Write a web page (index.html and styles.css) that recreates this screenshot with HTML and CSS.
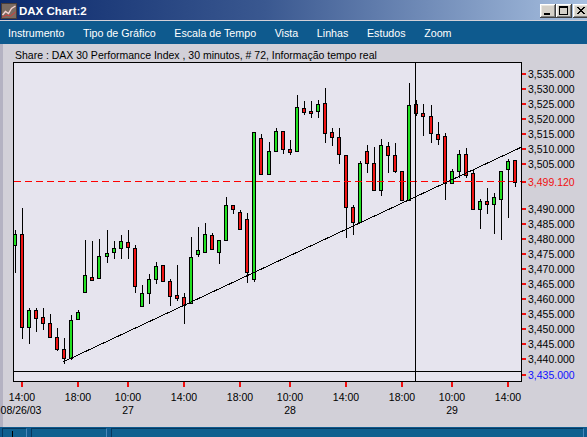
FILE: index.html
```html
<!DOCTYPE html>
<html>
<head>
<meta charset="utf-8">
<link rel="stylesheet" href="styles.css">
</head>
<body>
<div class="window">
  <div class="titlebar">
    <svg class="appicon" width="16" height="16" viewBox="0 0 16 16">
      <rect x="0" y="0" width="16" height="16" fill="#7a6b62"/>
      <rect x="0.5" y="0.5" width="15" height="15" fill="none" stroke="#4a3e38"/>
      <polyline points="1.5,12 4.5,8.5 7.5,10.5 10.5,5.5 14.5,3" fill="none" stroke="#f6d2d2" stroke-width="1.4"/>
      <polyline points="1.5,14 5.5,12 9.5,13 14.5,9" fill="none" stroke="#d83a3a" stroke-width="1"/>
    </svg>
    <span class="title">DAX Chart:2</span>
    <div class="buttons">
      <div class="btn">
        <svg width="16" height="14" viewBox="0 0 16 14"><rect x="4" y="9" width="6" height="2" fill="#000"/></svg>
      </div>
      <div class="btn">
        <svg width="16" height="14" viewBox="0 0 16 14"><rect x="3.5" y="2.5" width="8" height="8" fill="none" stroke="#000"/><rect x="3" y="2" width="9" height="2" fill="#000"/></svg>
      </div>
      <div class="btn btn-close">
        <svg width="16" height="14" viewBox="0 0 16 14"><path d="M4 3 L11 10 M5 3 L12 10 M11 3 L4 10 M12 3 L5 10" stroke="#000" stroke-width="1" fill="none"/></svg>
      </div>
    </div>
  </div>
  <div class="menubar">
    <span class="menuitem">Instrumento</span>
    <span class="menuitem">Tipo de Gráfico</span>
    <span class="menuitem">Escala de Tempo</span>
    <span class="menuitem">Vista</span>
    <span class="menuitem">Linhas</span>
    <span class="menuitem">Estudos</span>
    <span class="menuitem">Zoom</span>
  </div>
  <div class="content">
    <div class="info">Share : DAX 30 Performance Index , 30 minutos, # 72, Informação tempo real</div>
    <svg class="chart" width="587" height="367" viewBox="0 60 587 367">
      <defs>
        <clipPath id="plot"><rect x="14" y="63" width="507" height="318"/></clipPath>
      </defs>
      <rect class="plotbg" x="13.5" y="62.5" width="508" height="319"/>
      <g id="candles" clip-path="url(#plot)"></g>
      <g clip-path="url(#plot)">
        <line class="lastline" x1="14" y1="181.5" x2="521" y2="181.5"/>
        <line class="trend" x1="63" y1="362" x2="523" y2="146.4"/>
        <line class="cross" x1="14" y1="371.5" x2="521" y2="371.5"/>
        <line class="cross" x1="415.5" y1="63" x2="415.5" y2="381"/>
      </g>
      <rect class="plotborder" x="13.5" y="62.5" width="508" height="319"/>

      <g class="ticks">
        <rect x="522" y="73" width="4" height="2"/>
        <rect x="522" y="88" width="4" height="2"/>
        <rect x="522" y="103" width="4" height="2"/>
        <rect x="522" y="118" width="4" height="2"/>
        <rect x="522" y="133" width="4" height="2"/>
        <rect x="522" y="148" width="4" height="2"/>
        <rect x="522" y="163" width="4" height="2"/>
        <rect x="522" y="181" width="4" height="2"/>
        <rect x="522" y="208" width="4" height="2"/>
        <rect x="522" y="223" width="4" height="2"/>
        <rect x="522" y="238" width="4" height="2"/>
        <rect x="522" y="253" width="4" height="2"/>
        <rect x="522" y="268" width="4" height="2"/>
        <rect x="522" y="283" width="4" height="2"/>
        <rect x="522" y="298" width="4" height="2"/>
        <rect x="522" y="313" width="4" height="2"/>
        <rect x="522" y="328" width="4" height="2"/>
        <rect x="522" y="343" width="4" height="2"/>
        <rect x="522" y="358" width="4" height="2"/>
        <rect x="522" y="374" width="4" height="2"/>

        <rect x="21" y="382" width="2" height="5"/>
        <rect x="77" y="382" width="2" height="5"/>
        <rect x="127" y="382" width="2" height="5"/>
        <rect x="183" y="382" width="2" height="5"/>
        <rect x="239" y="382" width="2" height="5"/>
        <rect x="289" y="382" width="2" height="5"/>
        <rect x="345" y="382" width="2" height="5"/>
        <rect x="401" y="382" width="2" height="5"/>
        <rect x="451" y="382" width="2" height="5"/>
        <rect x="507" y="382" width="2" height="5"/>
      </g>

      <g class="plabels">
        <text x="528" y="77.8">3,535.000</text>
        <text x="528" y="92.8">3,530.000</text>
        <text x="528" y="107.8">3,525.000</text>
        <text x="528" y="122.8">3,520.000</text>
        <text x="528" y="137.8">3,515.000</text>
        <text x="528" y="152.8">3,510.000</text>
        <text x="528" y="167.8">3,505.000</text>
        <text class="red" x="528" y="185.8">3,499.120</text>
        <text x="528" y="212.8">3,490.000</text>
        <text x="528" y="227.8">3,485.000</text>
        <text x="528" y="242.8">3,480.000</text>
        <text x="528" y="257.8">3,475.000</text>
        <text x="528" y="272.8">3,470.000</text>
        <text x="528" y="287.8">3,465.000</text>
        <text x="528" y="302.8">3,460.000</text>
        <text x="528" y="317.8">3,455.000</text>
        <text x="528" y="332.8">3,450.000</text>
        <text x="528" y="347.8">3,445.000</text>
        <text x="528" y="362.8">3,440.000</text>
        <text class="blue" x="528" y="378.8">3,435.000</text>
      </g>

      <g class="tlabels">
        <text x="22" y="401">14:00</text>
        <text x="78" y="401">18:00</text>
        <text x="128" y="401">10:00</text>
        <text x="184" y="401">14:00</text>
        <text x="240" y="401">18:00</text>
        <text x="290" y="401">10:00</text>
        <text x="346" y="401">14:00</text>
        <text x="402" y="401">18:00</text>
        <text x="452" y="401">10:00</text>
        <text x="508" y="401">14:00</text>
        <text x="21" y="414">08/26/03</text>
        <text x="128" y="414">27</text>
        <text x="290" y="414">28</text>
        <text x="452" y="414">29</text>
      </g>
    </svg>
  </div>
  <div class="statusbar">
    <div class="panel p1"><span class="mark"></span></div>
    <div class="panel p2"></div>
    <div class="panel p3"></div>
  </div>
</div>
<script src="chart.js"></script>
</body>
</html>
```

FILE: styles.css
```css
html, body {
  margin: 0;
  padding: 0;
}

body {
  width: 587px;
  height: 437px;
  overflow: hidden;
  background: #d2d0d8;
  font-family: "Liberation Sans", Arial, sans-serif;
}

.window {
  width: 589px;
  display: flex;
  flex-direction: column;
}

.titlebar {
  height: 20px;
  box-sizing: border-box;
  padding-top: 2px;
  display: flex;
  align-items: center;
  background: linear-gradient(90deg, #0c2a6c 0%, #3a5890 45%, #a8c0e0 100%);
}

.appicon {
  margin-left: 1px;
  flex: none;
}

.title {
  margin-left: 2px;
  color: #ffffff;
  font-weight: bold;
  font-size: 11.5px;
  line-height: 14px;
}

.buttons {
  margin-left: auto;
  display: flex;
}

.btn {
  width: 16px;
  height: 14px;
  background: #d4d0c8;
  box-shadow: inset -1px -1px #404040, inset 1px 1px #ffffff, inset -2px -2px #808080, inset 2px 2px #e8e6e0;
}

.btn svg {
  display: block;
}

.btn-close {
  margin-left: 1px;
}

.menubar {
  margin-top: 1px;
  height: 23px;
  box-sizing: border-box;
  padding: 2px 0 0 8px;
  background: #0e5a8e;
  display: flex;
  gap: 18.6px;
  color: #ffffff;
  font-size: 10.7px;
  line-height: 21px;
  white-space: nowrap;
}

.content {
  height: 383px;
  background: linear-gradient(90deg, #b4b2c2 0, #b4b2c2 3px, #d2d0d8 3px);
}

.info {
  height: 16px;
  box-sizing: border-box;
  padding: 4.5px 0 0 15px;
  font-size: 10.5px;
  line-height: 12px;
  color: #000000;
  white-space: nowrap;
}

.chart {
  display: block;
}

.plotbg {
  fill: #e6e4ee;
  stroke: none;
}

.plotborder {
  fill: none;
  stroke: #000000;
  stroke-width: 1;
}

.lastline {
  stroke: #ff0000;
  stroke-width: 1;
  stroke-dasharray: 7 4;
  shape-rendering: crispEdges;
}

.trend {
  stroke: #000000;
  stroke-width: 1;
  shape-rendering: crispEdges;
}

.cross {
  stroke: #000000;
  stroke-width: 1;
}

.wick {
  stroke: #000000;
  stroke-width: 1;
}

.up {
  fill: #22e022;
  stroke: #000000;
  stroke-width: 1;
}

.down {
  fill: #f01414;
  stroke: #000000;
  stroke-width: 1;
}

.ticks rect {
  fill: #f01010;
}

.plabels text,
.tlabels text {
  font-family: "Liberation Sans", Arial, sans-serif;
  font-size: 10.5px;
  fill: #000000;
}

.tlabels text {
  text-anchor: middle;
}

.plabels .red {
  fill: #f01010;
}

.plabels .blue {
  fill: #1010ff;
}

.statusbar {
  height: 14px;
  box-sizing: border-box;
  padding: 1px 2px 0 2px;
  background: #0e5a8e;
  display: flex;
  gap: 4px;
}

.panel {
  height: 12px;
  box-sizing: border-box;
  border: 1px solid;
  border-color: #06385e #4a88bb #4a88bb #06385e;
  background: #10608f;
}

.p1 {
  width: 25px;
  position: relative;
}

.p2 {
  width: 76px;
}

.p3 {
  width: 473px;
}

.mark {
  position: absolute;
  left: 9px;
  top: 2px;
  width: 1px;
  height: 8px;
  background: #000000;
}
```

FILE: chart.js
```js
(function () {
  var NS = 'http://www.w3.org/2000/svg';
  // [colour, bodyTop, bodyBottom, high, low] in pixel rows
  var D = [
    ['g',234,245,230,272],['r',234,327,208,338],['g',310,327,308,343],['r',310,318,308,331],
    ['r',317,323,308,329],['r',323,337,314,337],['r',337,349,328,350],['r',349,358,338,363],
    ['g',320,358,315,359],['g',312,319,310,319],['g',275,292,240,292],['r',277,280,241,280],
    ['g',256,278,239,278],['g',253,256,230,262],['g',248,252,241,258],['g',241,248,235,258],
    ['r',242,247,230,258],['r',248,286,245,292],['g',293,306,285,306],['g',279,293,274,303],
    ['g',266,279,262,283],['r',265,281,265,281],['r',281,296,279,305],['r',295,298,265,300],
    ['r',297,305,293,323],['g',257,303,237,303],['g',250,254,227,256],['g',234,252,223,252],
    ['r',235,249,233,249],['g',240,252,240,263],['g',205,240,197,240],['r',205,209,205,213],
    ['r',212,229,210,229],['r',219,272,213,282],['g',132,279,132,281],['r',138,174,134,174],
    ['g',151,174,142,174],['g',131,151,128,151],['r',131,149,131,153],['r',149,152,140,154],
    ['g',107,151,95,151],['r',108,112,101,114],['r',111,113,101,117],['g',104,111,100,117],
    ['r',103,133,88,142],['r',132,137,128,145],['r',137,154,128,163],['r',155,207,155,237],
    ['r',207,222,205,234],['g',163,222,161,222],['r',151,163,145,172],['r',163,190,147,190],
    ['g',145,190,139,195],['r',146,155,142,172],['r',155,171,143,172],['r',171,200,171,200],
    ['g',105,200,83,200],['r',104,113,100,115],['r',113,116,104,135],['r',116,133,105,142],
    ['r',134,139,122,144],['r',136,183,133,199],['g',171,183,169,183],['g',154,171,150,177],
    ['r',154,175,148,177],['r',173,209,169,209],['g',201,209,199,228],['r',201,204,188,213],
    ['g',197,204,193,233],['g',171,199,171,239],['g',161,169,159,217],['r',160,182,160,186]
  ];
  var A = [[1,15],[10,78],[17,128],[33,240],[40,290],[56,402],[63,452],[72,515]];
  function cx(i) {
    for (var k = 0; k < A.length - 1; k++) {
      var a = A[k], b = A[k + 1];
      if (i >= a[0] && i <= b[0]) {
        return Math.round(a[1] + (b[1] - a[1]) * (i - a[0]) / (b[0] - a[0]));
      }
    }
    return 0;
  }
  var g = document.getElementById('candles');
  D.forEach(function (d, n) {
    var x = cx(n + 1);
    var w = document.createElementNS(NS, 'line');
    w.setAttribute('x1', x + 0.5);
    w.setAttribute('x2', x + 0.5);
    w.setAttribute('y1', d[3]);
    w.setAttribute('y2', d[4] + 1);
    w.setAttribute('class', 'wick');
    g.appendChild(w);
    var r = document.createElementNS(NS, 'rect');
    r.setAttribute('x', x - 1.5);
    r.setAttribute('y', d[1] + 0.5);
    r.setAttribute('width', 3);
    r.setAttribute('height', Math.max(1, d[2] - d[1]));
    r.setAttribute('class', d[0] === 'g' ? 'up' : 'down');
    g.appendChild(r);
  });
})();
```
